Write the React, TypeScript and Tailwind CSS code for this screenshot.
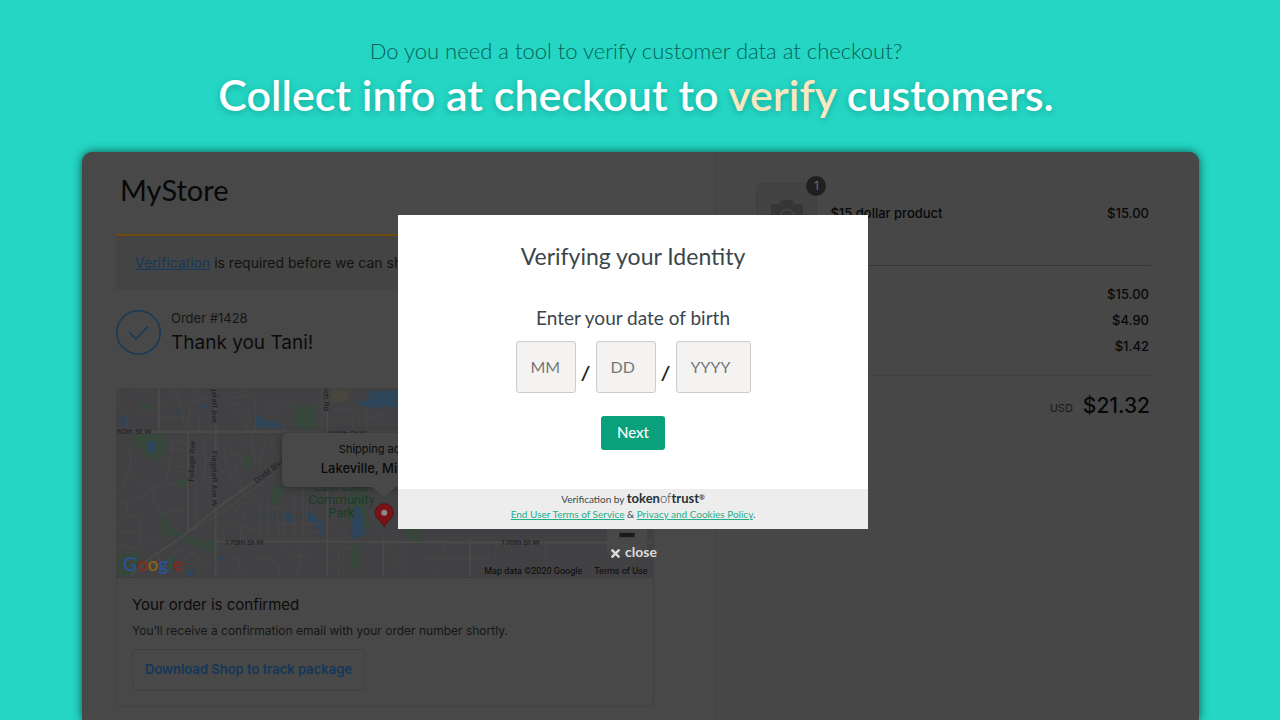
import React from "react";
import { FaTimes, FaCamera } from "react-icons/fa";
import { Minus, Plus } from "lucide-react";

const lato = "font-['Lato',sans-serif]";
const inter = "font-['Inter',sans-serif]";

const summary = [
  { label: "Subtotal", value: "$15.00" },
  { label: "Shipping", value: "$4.90" },
  { label: "Taxes", value: "$1.42" },
];

function StreetMap() {
  return (
    <svg
      className="block h-full w-full"
      viewBox="0 0 538 189"
      preserveAspectRatio="xMinYMin slice"
      role="img"
      aria-label="Map of the delivery area"
    >
      <rect width="538" height="189" fill="#414143" />
      <g fill="#38473b">
        <path d="M14 46l34 -1 1 20 -7 6 -10 -1 -6 -8 -10 -6z" />
        <path d="M44 124l10 14 12 8 22 6 12 2v9l-16 -3 -14 -6 -6 -6 -12 0 -8 -4z" />
        <path d="M178 17l21 -1 1 22 -10 2 -13 -4z" />
        <path d="M127 72l6 -9 3 6 -3 10 -7 3z" />
        <path d="M21 18l6 -4 9 2 1 4 -12 1z" />
        <path d="M58 92l10 -4 1 10 -8 0z" />
        <path d="M155 98l12 -2 -3 20 -9 1z" />
        <path d="M232 100l16 0 5 40 -14 3 -8 -12 2 -14z" />
        <path d="M234 155l8 0 2 24 -9 3z" />
        <path d="M0 166l21 -2 3 10 -8 12 -16 2z" />
        <path d="M286 140l18 2 0 14 -12 -3z" />
      </g>
      <path d="M214 1h20l-4 12 -16 2z" fill="#48463c" />
      <g fill="#2e4559">
        <path d="M31 53l8 -1 1 9 -4 4 -6 -3z" />
        <path d="M5 27l6 1 -1 9 -6 0z" />
        <path d="M84 17l6 -2 1 4 -6 1z" />
        <path d="M60 22l4 1 -3 3 -3 -1z" />
        <path d="M139 27l10 3 0 9 -10 -1z" />
        <path d="M151 31l8 2 9 6 -17 0z" />
        <path d="M243 12l8 -1 4 -11 10 3 6 -2 12 1 0 18 -10 -3 -14 2 -16 -2z" />
        <path d="M238 118l7 0 4 28 -11 5 -4 -8z" />
        <path d="M167 123l7 2 1 8 -5 1z" />
        <path d="M187 124l11 1 2 5 6 3 1 16 -6 -8 -2 -7 -9 -1z" />
        <path d="M102 167l7 3 2 4 -7 -2z" />
        <path d="M71 182l6 -2 -2 8 -6 0z" />
      </g>
      <g fill="none" stroke="#33424d" strokeWidth="1">
        <path d="M135 131h9l5 -4h18M175 128h12" />
      </g>
      <g fill="none" stroke="#474748" strokeWidth="1">
        <path d="M2 0v20l8 6v16M16 3l10 -2 16 6M16 16l8 6h18M53 0l-4 14 -6 3M51 6l22 8 -2 28M73 14l22 -6M80 0l3 42M43 28h28l10 -8M60 2l8 36" />
        <path d="M104 4l14 5 18 -3M108 18q12 -8 22 3t-4 18M124 0l3 10M118 24q14 2 12 18M139 10v32M138 14h70M147 28l12 -6v-8M160 24l10 18M205 4v36" />
        <path d="M10 56q8 20 0 30l24 14 22 -6 14 4M10 86l-8 20M34 100q-8 12 -18 10l-14 6M50 50l20 4M52 60l19 2M56 52l-6 40M43 70h27M51 78h19" />
        <path d="M78 48l2 92M85 44q8 30 0 54M110 44l-2 30 10 22M112 56l14 -10M110 68l12 -4 6 14M118 48q22 6 20 30M136 46q-6 18 12 30M150 44l-8 36M146 60l14 -12M155 48l5 18M126 96l-8 -18" />
        <path d="M0 136q18 -16 22 -4l2 28M2 144h22M12 128l-4 -18M24 132l-6 -16M28 152q10 -8 18 3M30 108q12 10 16 16l20 -2M34 100l10 28M0 156l30 6" />
        <path d="M105 144l18 -28 20 -6v42M112 138l14 0 4 -18M126 138l18 4M130 110l-8 -16M143 120h24v32M151 108v44M160 118l4 34M167 100h20v52M178 104v48M190 112v40M143 144h66M124 138v14M155 136h50" />
        <path d="M44 162q-6 12 6 18M54 166q10 -8 24 0M60 176l16 -10 18 12M32 182l10 -14 6 21M78 164l6 25M104 176l16 -8 8 20M124 164l-4 25M130 156l10 14 22 3M142 170q20 -4 22 19M166 154l8 14 24 -2M186 156l-6 33M214 160h28M216 172l16 8M222 154v35" />
        <path d="M216 24q14 -10 28 4M216 32h28l24 -8M236 22v20M250 20v22M262 24v18M216 110l16 4M216 124l18 -8M216 136q8 4 18 14M252 120l16 30M252 104l14 14M270 154l20 35M290 156v33M330 154l-10 35M380 154v35M430 154v35M306 170h70" />
      </g>
      <g fill="none" stroke="#4a4a4b">
        <path d="M0 43h538" strokeWidth="3" />
        <path d="M99 153h120l130 1h189" strokeWidth="2" />
        <path d="M42 0v43M71 43v100M267 150v39" strokeWidth="2" />
        <path d="M99 0v189M211 0v189M354 150v39" strokeWidth="2" />
        <path d="M34 169l37 -25 30 -25 65 -47 31 -29" strokeWidth="2" />
        <path d="M71 144l34 -20 62 -46" strokeWidth="1" />
        <path d="M34 169l-22 20" strokeWidth="2" />
      </g>
      <g
        fontFamily="Roboto, sans-serif"
        fontSize="8"
        fill="#1c1c1e"
        stroke="#444446"
        strokeWidth="1"
        paintOrder="stroke"
      >
        <text x="0" y="45">60th St W</text>
        <text x="211" y="47">160th St W</text>
        <text x="108" y="156">170th St W</text>
        <text x="385" y="156">170th St W</text>
        <text transform="translate(77 93) rotate(-88)">Foliage Ave</text>
        <text transform="translate(95 -2) rotate(90)">gstaff Ave</text>
        <text transform="translate(95 62) rotate(90)">Flagstaff Ave W</text>
        <text transform="translate(140 95) rotate(-37)">Dodd Blvd</text>
        <text transform="translate(208 0) rotate(90)">ich Rd</text>
      </g>
      <g
        fontFamily="Roboto, sans-serif"
        fontSize="13"
        textAnchor="middle"
        fill="#1a3d25"
      >
        <text x="225" y="102">East Lake</text>
        <text x="225" y="115">Community</text>
        <text x="225" y="128">Park</text>
      </g>
      <path
        d="M268 138c-2 -5 -9 -8 -9 -14a9 9 0 0 1 18 0c0 6 -7 9 -9 14z"
        fill="#7a1218"
        stroke="#5a0f13"
      />
      <circle cx="268" cy="124" r="3" fill="#8a8a8a" />
    </svg>
  );
}

function GoogleMark() {
  return (
    <span className="absolute bottom-0 left-1.5 font-['Lato',sans-serif] text-[19px] leading-[26px] font-semibold">
      <span className="text-[#2a5196]">G</span>
      <span className="text-[#86291f]">o</span>
      <span className="text-[#86660f]">o</span>
      <span className="text-[#2a5196]">g</span>
      <span className="text-[#1f5f31]">l</span>
      <span className="text-[#86291f]">e</span>
    </span>
  );
}

function OrderColumn() {
  return (
    <section className="w-[56.8%] border-r border-[#424242] pr-[61px] pb-[13px] pl-[34px]">
      <h2 className={`${lato} pt-[21px] pl-1 text-[29px] leading-[34px] text-[#080808]`}>MyStore</h2>

      <p className="mt-[27px] border-t-2 border-[#70490f] bg-[#444] px-[19px] py-[17px] text-sm leading-5 whitespace-nowrap text-[#121212]">
        <a href="#verification" className="text-[#143a5c] underline">
          Verification
        </a>{" "}
        is required before we can ship your order.
      </p>

      <div className="mt-4 flex items-center gap-2.5">
        <svg className="size-[45px]" viewBox="0 0 45 45" fill="none" stroke="#143a5c">
          <circle cx="22.5" cy="22.5" r="21.7" strokeWidth="1.5" />
          <path d="M13.5 22.5l6.5 6.500 12 -12.500" strokeWidth="1.5" />
        </svg>
        <div className="pt-0.5">
          <p className="text-[13px] leading-5 text-[#161616]">Order #1428</p>
          <p className="text-[19px] leading-[30px] text-[#0b0b0b]">Thank you Tani!</p>
        </div>
      </div>

      <div className="mt-[30px] rounded-[4px] border border-[#414141]">
        <div className="relative h-[189px] overflow-hidden border-b border-[#3e3e3e]">
          <StreetMap />
          <div className="absolute top-11 left-[165px] w-[204px] rounded-md bg-[#484848] py-1.5 text-center text-[#0b0b0b] shadow-[0_1px_6px_#2a2a2a]">
            <p className="text-[11px] leading-5">Shipping address</p>
            <p className="text-[13px] leading-[18px] font-medium">Lakeville, Minnesota</p>
            <p className="h-1" />
            <svg className="absolute top-full left-[90px] h-2.5 w-6" viewBox="0 0 24 10">
              <path d="M0 0h24l-12 10z" fill="#484848" />
            </svg>
          </div>
          <GoogleMark />
          <div className="absolute right-1.5 bottom-[22px] flex w-10 flex-col rounded-sm bg-[#484848] text-[#1a1a1a]">
            <button type="button" aria-label="Zoom in" className="flex h-10 items-center justify-center">
              <Plus size={26} strokeWidth={4} />
            </button>
            <button type="button" aria-label="Zoom out" className="flex h-10 items-center justify-center">
              <Minus size={26} strokeWidth={4} strokeLinecap="butt" />
            </button>
          </div>
          <p className="absolute right-1.5 bottom-0 flex gap-3 font-['Roboto',sans-serif] text-[9px] leading-3 text-[#080808]">
            <span>Map data ©2020 Google</span>
            <a href="#terms">Terms of Use</a>
          </p>
        </div>
        <div className="px-[15px] pt-[15px] pb-[15px]">
          <h3 className="text-[15px] leading-6 text-[#0b0b0b]">Your order is confirmed</h3>
          <p className="mt-1 text-xs leading-5 text-[#161616]">
            You’ll receive a confirmation email with your order number shortly.
          </p>
          <button
            type="button"
            className="mt-2 h-[42px] rounded-[4px] border border-[#404040] px-3 text-[13px] font-semibold text-[#12375a]"
          >
            Download Shop to track package
          </button>
        </div>
      </div>
    </section>
  );
}

function SummaryColumn() {
  return (
    <section className="flex-1 rounded-tr-[10px] bg-[#474747] pt-[31px] pr-12 pl-10 text-[13px] text-[#080808]">
      <div className="flex items-center gap-[13px] pb-[21px] font-medium">
        <div className="relative flex size-[61px] items-center justify-center rounded-md border border-[#404040] bg-[#434343]">
          <FaCamera size={32} className="text-[#363636]" />
          <span className="absolute -top-2 -right-2.5 flex size-5 items-center justify-center rounded-full bg-[#202020] text-xs font-normal text-[#6f6f6f]">
            1
          </span>
        </div>
        <span className="flex-1">$15 dollar product</span>
        <span className="pr-0.5">$15.00</span>
      </div>
      <dl className="border-y border-t-[#363636] border-b-[#404040] pt-[15px] pr-0.5 pb-4">
        {summary.map((row) => (
          <div key={row.label} className="flex justify-between leading-[26px]">
            <dt className="text-[#1c1c1c]">{row.label}</dt>
            <dd className="font-medium">{row.value}</dd>
          </div>
        ))}
      </dl>
      <div className="flex items-center pt-3 pr-px leading-8">
        <span className="flex-1 text-base">Total</span>
        <span className="pt-1 pr-2.5 text-[11px] text-[#1a1a1a]">USD</span>
        <span className="text-[21px] font-medium">$21.32</span>
      </div>
    </section>
  );
}

function DateField({ id, label, hint, wide }: { id: string; label: string; hint: string; wide?: boolean }) {
  return (
    <input
      id={id}
      type="text"
      inputMode="numeric"
      aria-label={label}
      placeholder={hint}
      className={`${
        wide ? "w-[75px]" : "w-[60px]"
      } h-[52px] rounded-[3px] border border-[#ccc] bg-[#f4f3f2] px-3.5 pb-0.5 text-base text-[#333] placeholder:text-[#777]`}
    />
  );
}

function VerifyDialog() {
  return (
    <div className={`${lato} absolute inset-0 flex flex-col items-center pt-[63px] pr-[15px]`}>
      <div role="dialog" aria-labelledby="verify-title" className="w-[470px] bg-white text-center text-[#3b464c]">
        <h2 id="verify-title" className="pt-[25px] text-[23px] leading-8">
          Verifying your Identity
        </h2>
        <p className="mt-8 text-[19px] leading-7">Enter your date of birth</p>
        <div className="mt-[9px] flex items-center justify-center">
          <DateField id="dob-month" label="Month" hint="MM" />
          <span className="w-5 pt-3 text-lg leading-5 font-black text-[#222] italic">/</span>
          <DateField id="dob-day" label="Day" hint="DD" />
          <span className="w-5 pt-3 text-lg leading-5 font-black text-[#222] italic">/</span>
          <DateField id="dob-year" label="Year" hint="YYYY" wide />
        </div>
        <button type="button" className="mt-[23px] h-[34px] rounded-[3px] bg-[#08a17b] px-4 pb-0.5 text-[15px] font-medium text-white">
          Next
        </button>
        <div className="mt-[39px] bg-[#ededed] pt-0.5 pb-[7px] text-[10px] leading-[15px]">
          <p>
            Verification by{" "}
            <span className="text-[13px] text-[#26323a]">
              <b>token</b>
              <span className="font-light">of</span>
              <b>trust</b>
            </span>
            <sup className="text-[7px] font-bold">®</sup>
          </p>
          <p>
            <a href="#eula" className="text-[#1fae88] underline">
              End User Terms of Service
            </a>{" "}
            &amp;{" "}
            <a href="#privacy" className="text-[#1fae88] underline">
              Privacy and Cookies Policy
            </a>
            .
          </p>
        </div>
      </div>
      <button type="button" className="mt-[13px] flex items-center gap-[3px] text-sm leading-5 font-bold text-[#dcdcdc]">
        <FaTimes size={13} className="mt-0.5" />
        close
      </button>
    </div>
  );
}

export default function App() {
  return (
    <div className={`${inter} flex min-h-screen flex-col overflow-hidden bg-[#24d6c3]`}>
      <header className={`${lato} pt-9 pr-2 pb-[30px] text-center`}>
        <p className="text-[22px] leading-[30px] font-light text-[#056257]">
          Do you need a tool to verify customer data at checkout?
        </p>
        <h1 className="mt-0.5 text-[43px] leading-[54px] font-semibold text-white [text-shadow:0_2px_6px_rgba(0,90,80,0.35)]">
          Collect info at checkout to <span className="text-[#f8e7bf]">verify</span> customers.
        </h1>
      </header>
      <div className="flex flex-1 pr-[81px] pl-[82px]">
        <main className="relative flex flex-1 rounded-t-[10px] bg-[#484848] shadow-[0_0_10px_rgba(0,50,45,0.8)]">
          <OrderColumn />
          <SummaryColumn />
          <VerifyDialog />
        </main>
      </div>
    </div>
  );
}
